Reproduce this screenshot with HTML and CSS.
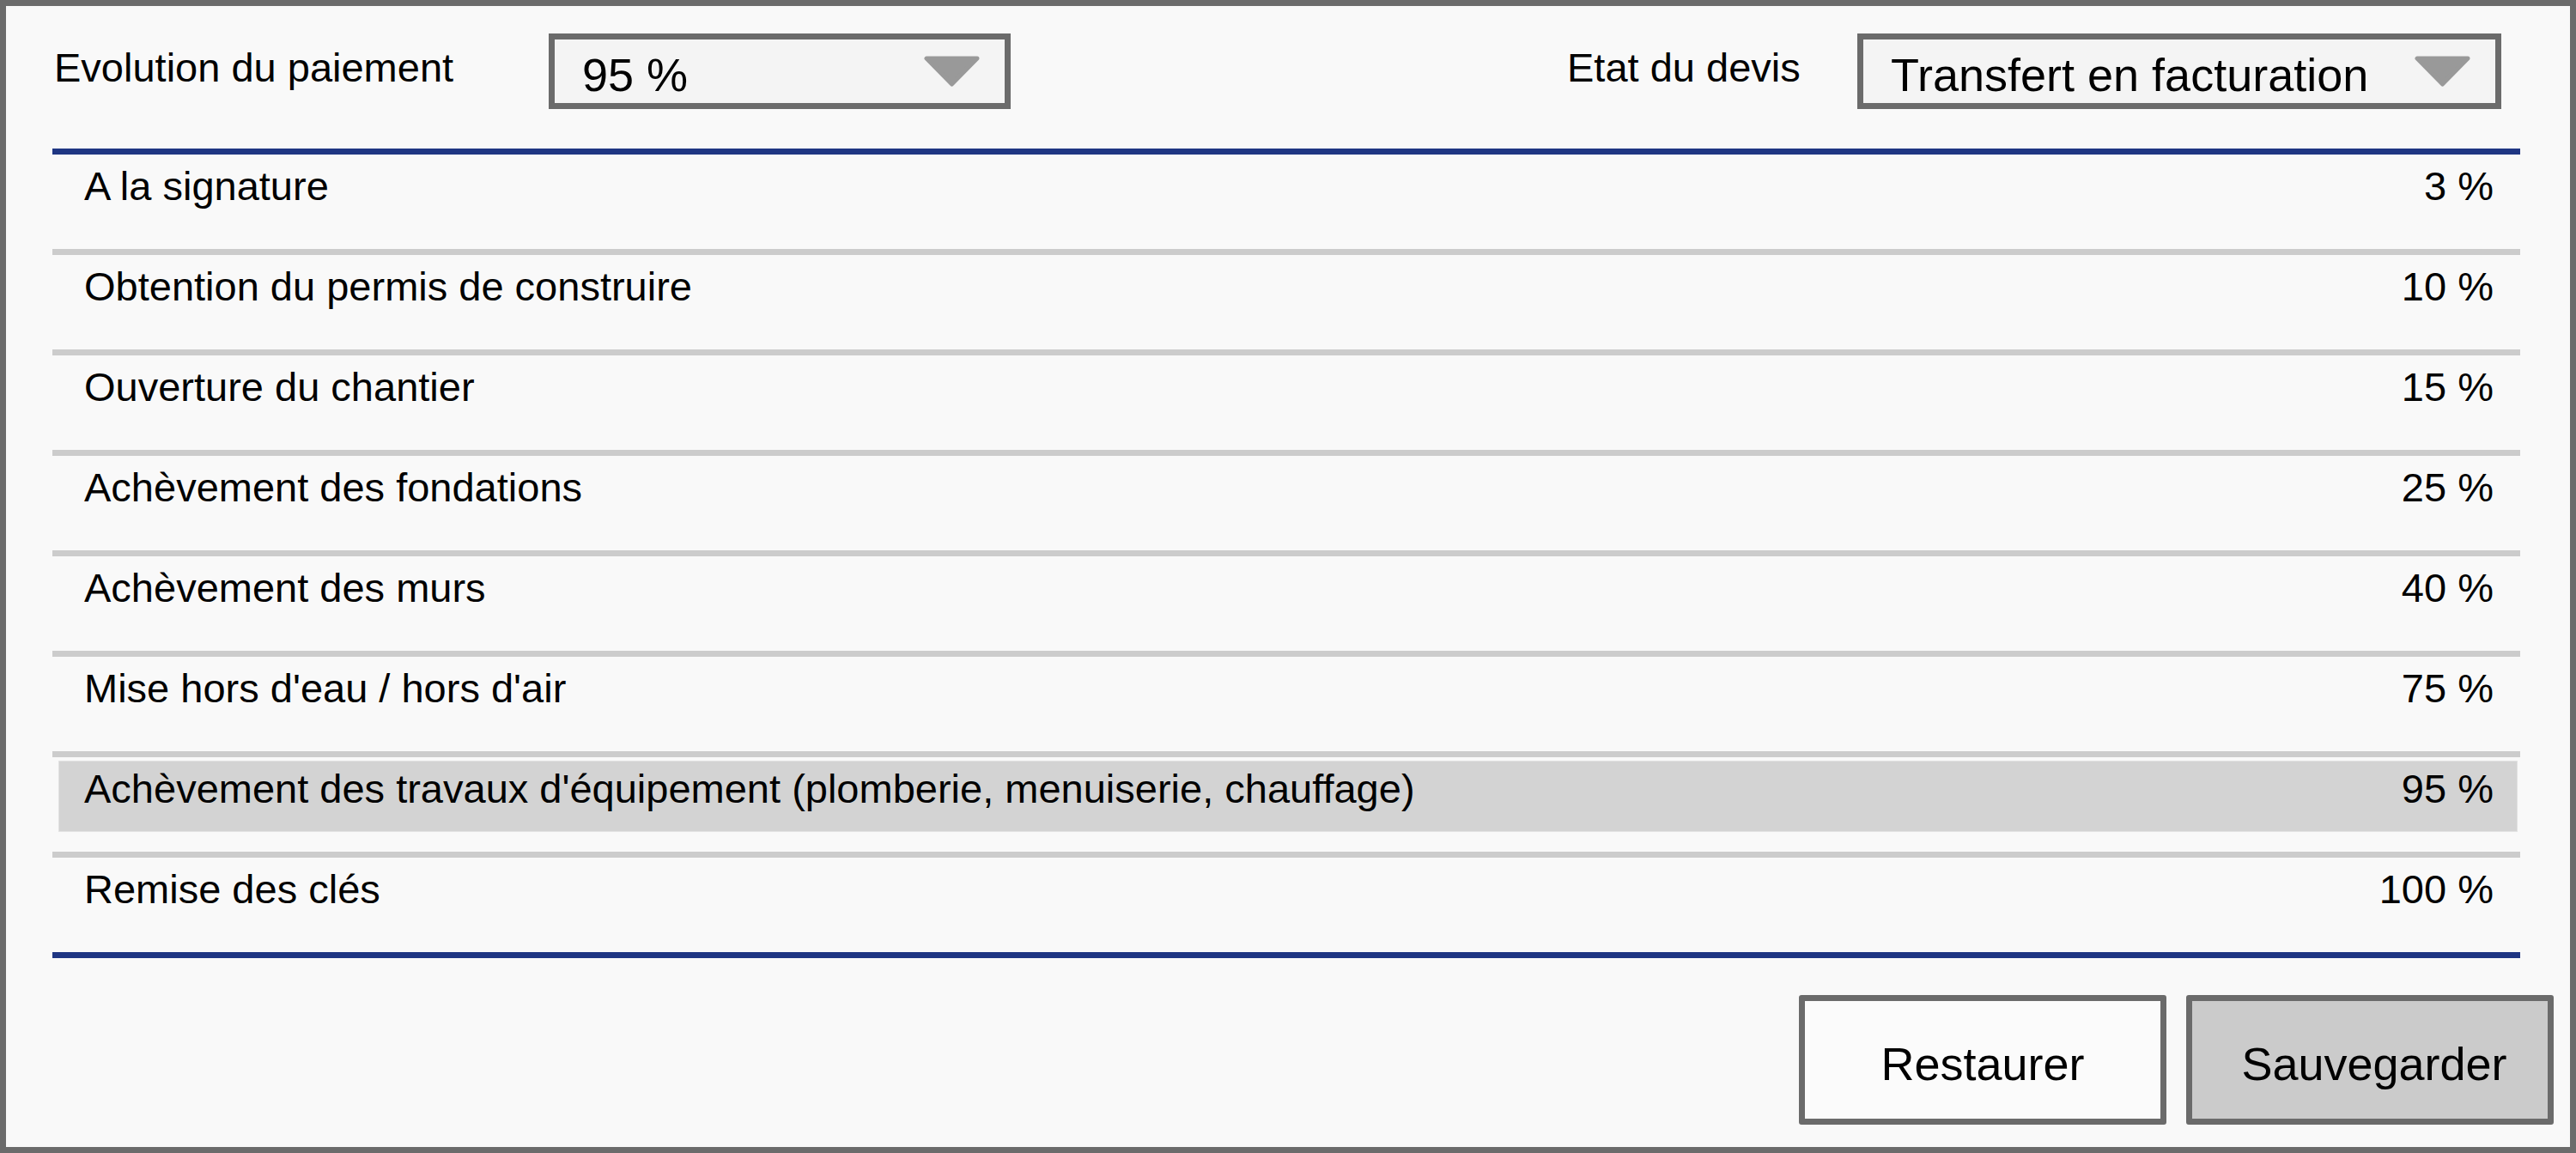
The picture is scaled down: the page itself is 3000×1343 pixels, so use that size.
FILE: index.html
```html
<!DOCTYPE html>
<html lang="fr">
<head>
<meta charset="utf-8">
<title>Evolution du paiement</title>
<link rel="stylesheet" href="styles.css">
</head>
<body>
<div class="frame">
  <div class="content">
    <header class="toolbar">
      <div class="field">
        <span class="field-label label-progress">Evolution du paiement</span>
        <div class="select select-progress">
          <span class="select-value">95 %</span>
          <svg class="select-arrow" viewBox="0 0 65 36" width="65" height="36"><path d="M3 3 H62 L32.5 33 Z" fill="#999" stroke="#999" stroke-width="5" stroke-linejoin="round"/></svg>
        </div>
      </div>
      <div class="field">
        <span class="field-label label-status">Etat du devis</span>
        <div class="select select-status">
          <span class="select-value">Transfert en facturation</span>
          <svg class="select-arrow" viewBox="0 0 65 36" width="65" height="36"><path d="M3 3 H62 L32.5 33 Z" fill="#999" stroke="#999" stroke-width="5" stroke-linejoin="round"/></svg>
        </div>
      </div>
    </header>

    <div class="milestones">
      <div class="milestone"><div class="milestone-item"><span>A la signature</span><span>3 %</span></div></div>
      <div class="milestone"><div class="milestone-item"><span>Obtention du permis de construire</span><span>10 %</span></div></div>
      <div class="milestone"><div class="milestone-item"><span>Ouverture du chantier</span><span>15 %</span></div></div>
      <div class="milestone"><div class="milestone-item"><span>Achèvement des fondations</span><span>25 %</span></div></div>
      <div class="milestone"><div class="milestone-item"><span>Achèvement des murs</span><span>40 %</span></div></div>
      <div class="milestone"><div class="milestone-item"><span>Mise hors d'eau / hors d'air</span><span>75 %</span></div></div>
      <div class="milestone"><div class="milestone-item is-selected"><span>Achèvement des travaux d'équipement (plomberie, menuiserie, chauffage)</span><span>95 %</span></div></div>
      <div class="milestone"><div class="milestone-item"><span>Remise des clés</span><span>100 %</span></div></div>
    </div>
  </div>

  <footer class="actions">
    <button class="btn btn-restore" type="button">Restaurer</button>
    <button class="btn btn-save" type="button">Sauvegarder</button>
  </footer>
</div>
</body>
</html>
```

FILE: styles.css
```css
html, body {
  margin: 0;
  padding: 0;
  background: #f9f9f9;
}

body {
  font-family: "Liberation Sans", Arial, sans-serif;
  color: #000;
}

.frame {
  box-sizing: border-box;
  width: 3000px;
  height: 1343px;
  border: 7px solid #6b6b6b;
  background: #f9f9f9;
  display: flex;
  flex-direction: column;
}

.content {
  margin: 0 58px 0 54px;
}

.toolbar {
  display: flex;
  justify-content: space-between;
  align-items: flex-start;
  padding: 32px 22px 0 2px;
}

.field {
  display: flex;
  align-items: flex-start;
}

.field-label {
  font-size: 47px;
  line-height: normal;
  margin-top: 12px;
  white-space: nowrap;
}

.label-progress { width: 576px; }
.label-status { width: 338px; }

.select {
  box-sizing: border-box;
  height: 88px;
  border: 7px solid #6b6b6b;
  background: #f4f4f4;
  display: flex;
  align-items: flex-start;
  justify-content: space-between;
  padding: 10px 29px 0 32px;
}

.select-progress { width: 538px; }
.select-status { width: 750px; }

.select-value {
  font-size: 54px;
  line-height: normal;
  white-space: nowrap;
}

.select-arrow {
  display: block;
  margin-top: 9px;
  flex: none;
}

.milestones {
  margin-top: 46px;
  border-top: 7px solid #1f3683;
  border-bottom: 7px solid #1f3683;
}

.milestone {
  height: 106px;
  padding-top: 4px;
}

.milestone + .milestone {
  border-top: 7px solid #cccccc;
}

.milestone-item {
  box-sizing: border-box;
  height: 83px;
  margin: 0 3px 0 7px;
  padding: 5px 28px 0 30px;
  display: flex;
  justify-content: space-between;
  align-items: flex-start;
  font-size: 47px;
  line-height: normal;
  white-space: nowrap;
}

.milestone-item.is-selected {
  background: #d3d3d3;
  box-shadow: inset 0 0 0 1px #e2e2e2;
}

.actions {
  display: flex;
  justify-content: flex-end;
  gap: 23px;
  padding: 43px 19px 0 0;
}

.btn {
  box-sizing: border-box;
  width: 428px;
  height: 151px;
  border: 7px solid #6b6b6b;
  border-radius: 3px;
  font-family: "Liberation Sans", Arial, sans-serif;
  font-size: 54px;
  color: #000;
  display: flex;
  align-items: center;
  justify-content: center;
  padding: 8px 0 0 0;
  margin: 0;
  cursor: pointer;
}

.btn-restore { background: #fbfbfb; }
.btn-save { background: #cbcbcb; padding-left: 10px; }
```
